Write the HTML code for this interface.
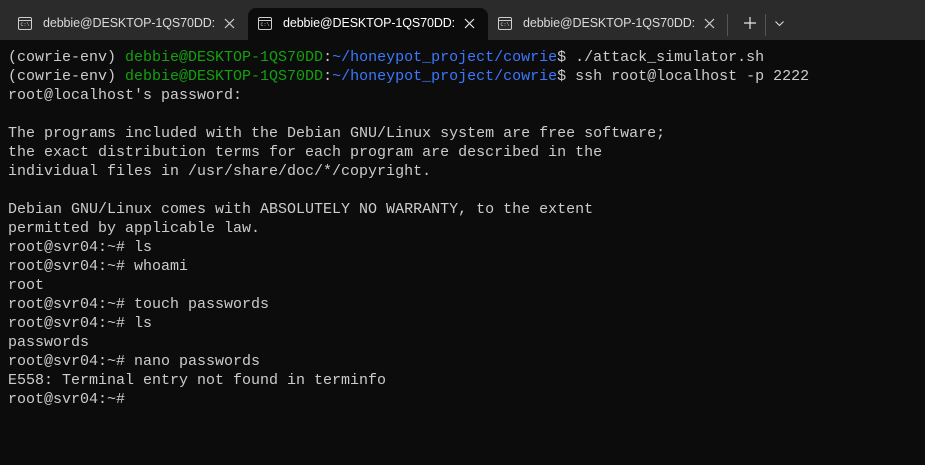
<!DOCTYPE html>
<html><head><meta charset="utf-8"><style>
*{margin:0;padding:0;box-sizing:border-box}
body{width:925px;height:465px;background:#0c0c0c;overflow:hidden;font-family:"Liberation Sans",sans-serif}
.bar{position:absolute;left:0;top:0;width:925px;height:40px;background:#2b2b2b}
.tab{position:absolute;top:8px;height:32px;width:240px;color:#dadada;font-size:12.5px}
.tab.active{background:#0c0c0c;border-radius:8px 8px 0 0;color:#fff}
.ic{position:absolute;left:10px;top:9px;width:14px;height:13px;border:1px solid #cfcfcf;border-radius:2px;font-size:5px;line-height:10px;text-align:center;color:#cfcfcf;font-family:"Liberation Mono",monospace;padding-top:2px}
.ic:before{content:"";position:absolute;left:0;right:0;top:2px;border-top:1px solid #cfcfcf}
.t{position:absolute;left:35px;top:8px;white-space:nowrap;width:176px;overflow:hidden;letter-spacing:-0.1px}
.x{position:absolute;left:216px;top:10px}
.term{position:absolute;left:8px;top:48px;font-family:"Liberation Mono",monospace;font-size:15px;line-height:19px;color:#cccccc;white-space:pre}
.g{color:#13a10e}.b{color:#3b78ff}
</style></head><body>
<div class="bar"></div>
<div class="tab" style="left:8px"><div class="ic">C:\</div><div class="t">debbie@DESKTOP-1QS70DD: ·</div><svg class="x" width="11" height="11"><path d="M1 1L10 10M10 1L1 10" stroke="#d0d0d0" stroke-width="1.2"/></svg></div>
<div class="tab active" style="left:248px"><div class="ic">C:\</div><div class="t">debbie@DESKTOP-1QS70DD:</div><svg class="x" width="11" height="11"><path d="M1 1L10 10M10 1L1 10" stroke="#e8e8e8" stroke-width="1.2"/></svg></div>
<div class="tab" style="left:488px"><div class="ic">C:\</div><div class="t">debbie@DESKTOP-1QS70DD: ·</div><svg class="x" width="11" height="11"><path d="M1 1L10 10M10 1L1 10" stroke="#d0d0d0" stroke-width="1.2"/></svg></div>
<div style="position:absolute;left:727px;top:14px;width:1px;height:22px;background:#555"></div>
<svg style="position:absolute;left:744px;top:17px" width="12" height="12"><path d="M6 0V12M0 6H12" stroke="#e8e8e8" stroke-width="1.2"/></svg>
<div style="position:absolute;left:765px;top:14px;width:1px;height:22px;background:#555"></div>
<svg style="position:absolute;left:775px;top:21px" width="9" height="6"><path d="M0.5 0.5L4.5 4.5L8.5 0.5" stroke="#ddd" stroke-width="1.1" fill="none"/></svg>
<div class="term">(cowrie-env) <span class="g">debbie@DESKTOP-1QS70DD</span>:<span class="b">~/honeypot_project/cowrie</span>$ ./attack_simulator.sh
(cowrie-env) <span class="g">debbie@DESKTOP-1QS70DD</span>:<span class="b">~/honeypot_project/cowrie</span>$ ssh root@localhost -p 2222
root@localhost's password:

The programs included with the Debian GNU/Linux system are free software;
the exact distribution terms for each program are described in the
individual files in /usr/share/doc/*/copyright.

Debian GNU/Linux comes with ABSOLUTELY NO WARRANTY, to the extent
permitted by applicable law.
root@svr04:~# ls
root@svr04:~# whoami
root
root@svr04:~# touch passwords
root@svr04:~# ls
passwords
root@svr04:~# nano passwords
E558: Terminal entry not found in terminfo
root@svr04:~#</div>
</body></html>
